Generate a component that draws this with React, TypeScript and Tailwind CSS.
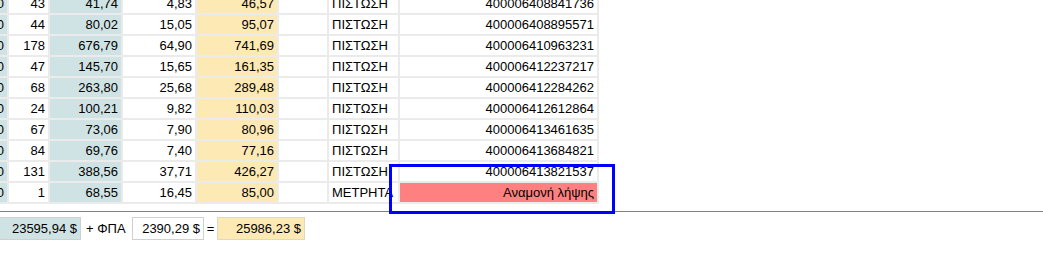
const rows = [
  ["0", "43", "41,74", "4,83", "46,57", "", "ΠΙΣΤΩΣΗ", "400006408841736"],
  ["0", "44", "80,02", "15,05", "95,07", "", "ΠΙΣΤΩΣΗ", "400006408895571"],
  ["0", "178", "676,79", "64,90", "741,69", "", "ΠΙΣΤΩΣΗ", "400006410963231"],
  ["0", "47", "145,70", "15,65", "161,35", "", "ΠΙΣΤΩΣΗ", "400006412237217"],
  ["0", "68", "263,80", "25,68", "289,48", "", "ΠΙΣΤΩΣΗ", "400006412284262"],
  ["0", "24", "100,21", "9,82", "110,03", "", "ΠΙΣΤΩΣΗ", "400006412612864"],
  ["0", "67", "73,06", "7,90", "80,96", "", "ΠΙΣΤΩΣΗ", "400006413461635"],
  ["0", "84", "69,76", "7,40", "77,16", "", "ΠΙΣΤΩΣΗ", "400006413684821"],
  ["0", "131", "388,56", "37,71", "426,27", "", "ΠΙΣΤΩΣΗ", "400006413821537"],
  ["0", "1", "68,55", "16,45", "85,00", "", "ΜΕΤΡΗΤΑ", "Αναμονή λήψης"],
];

// background per column
const colBg = [
  "bg-[#d0e3e4]",
  "bg-white",
  "bg-[#d0e3e4]",
  "bg-white",
  "bg-[#fde9b3]",
  "bg-white",
  "bg-white",
  "bg-white",
];

export default function App() {
  return (
    <div className="relative w-[1043px] h-[256px] overflow-hidden bg-white text-[13px] text-black font-['Liberation_Sans',Arial,sans-serif]">
      {/* table */}
      <div className="-mt-[8px] -ml-[35px] w-fit grid grid-cols-[40px_39px_71px_72px_80px_48px_69px_197px] gap-[2px] p-[2px] bg-[#ebebeb]">
        {rows.map((r, i) =>
          r.map((c, j) => {
            const pending = j === 7 && c === "Αναμονή λήψης";
            return (
              <div
                key={i + "-" + j}
                className={
                  "h-[19px] leading-[19px] whitespace-nowrap " +
                  (j === 6 ? "text-left pl-[3px] overflow-visible " : "text-right pr-[3px] overflow-hidden ") +
                  (pending ? "bg-[#ff8080]" : colBg[j])
                }
              >
                {c}
              </div>
            );
          })
        )}
      </div>

      <div className="mt-[7px] h-px bg-[#808080]" />

      {/* totals */}
      <div className="mt-[5px] flex items-center h-[23px]">
        <div className="-ml-[10px] w-[91px] h-[23px] leading-[21px] text-right pr-[3px] bg-[#d0e3e4] border border-[#d0d0d0]">
          23595,94 $
        </div>
        <div className="w-[51px] pl-[5px] whitespace-nowrap">+ ΦΠΑ</div>
        <div className="w-[72px] h-[23px] leading-[21px] text-right pr-[3px] bg-white border border-[#d0d0d0]">
          2390,29 $
        </div>
        <div className="w-[13px] text-center">=</div>
        <div className="w-[88px] h-[23px] leading-[21px] text-right pr-[3px] bg-[#fde9b3] border border-[#e0d8c0]">
          25986,23 $
        </div>
      </div>

      {/* selection outline */}
      <div className="absolute left-[389px] top-[164px] w-[226px] h-[50px] border-[3px] border-[#0000ff]" />
    </div>
  );
}
